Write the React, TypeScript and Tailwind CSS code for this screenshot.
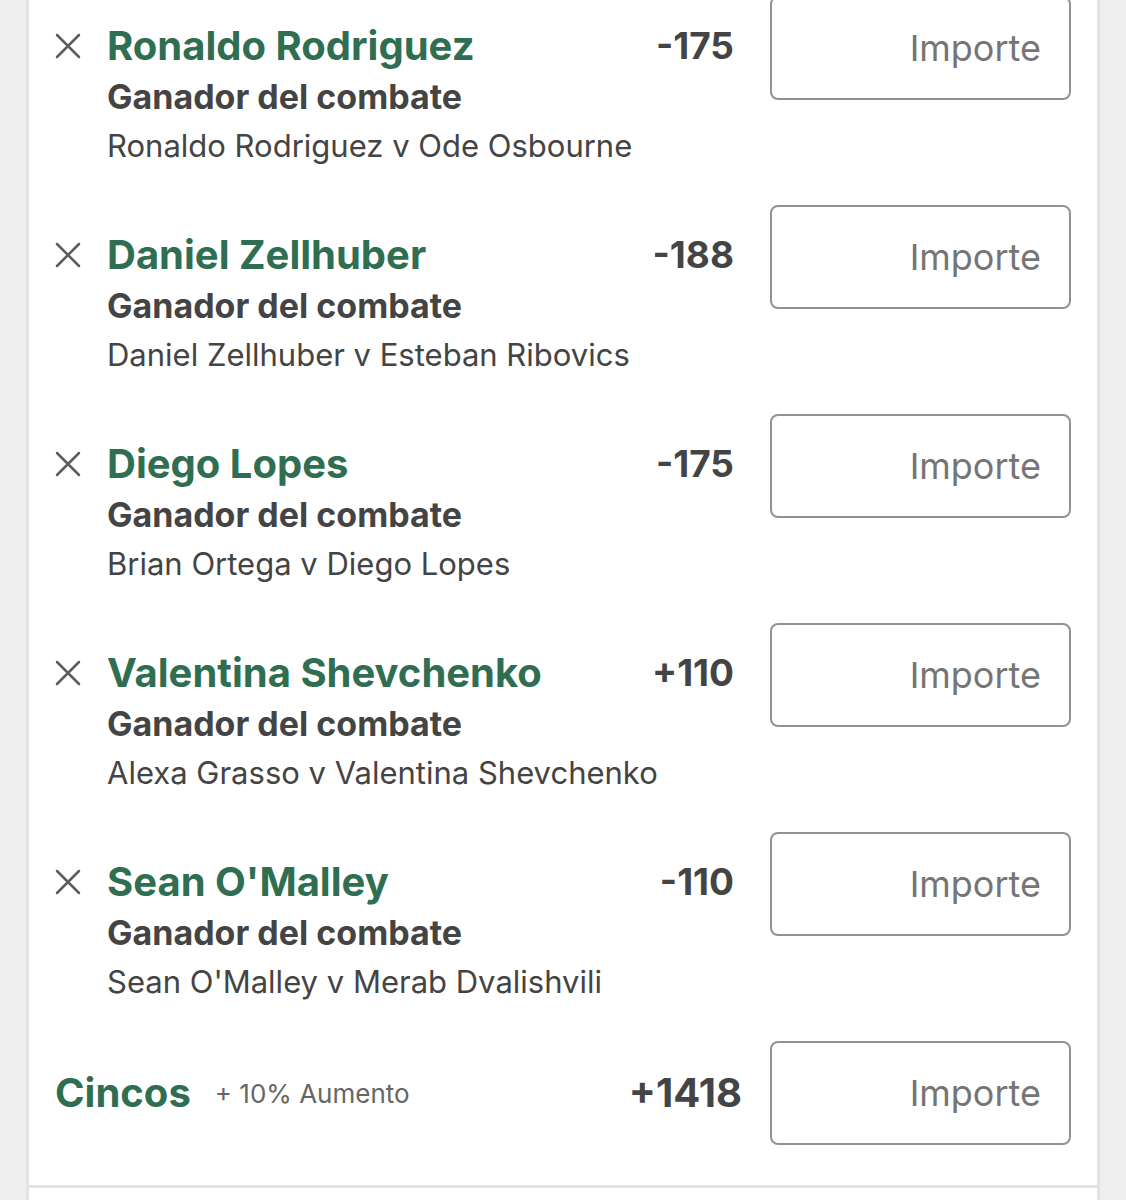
import { useState } from 'react';

interface Selection {
  id: string;
  name: string;
  market: string;
  event: string;
  odds: string;
}

const initialSelections: Selection[] = [
  { id: 'rodriguez', name: 'Ronaldo Rodriguez', market: 'Ganador del combate', event: 'Ronaldo Rodriguez v Ode Osbourne', odds: '-175' },
  { id: 'zellhuber', name: 'Daniel Zellhuber', market: 'Ganador del combate', event: 'Daniel Zellhuber v Esteban Ribovics', odds: '-188' },
  { id: 'lopes', name: 'Diego Lopes', market: 'Ganador del combate', event: 'Brian Ortega v Diego Lopes', odds: '-175' },
  { id: 'shevchenko', name: 'Valentina Shevchenko', market: 'Ganador del combate', event: 'Alexa Grasso v Valentina Shevchenko', odds: '+110' },
  { id: 'omalley', name: "Sean O'Malley", market: 'Ganador del combate', event: "Sean O'Malley v Merab Dvalishvili", odds: '-110' }
];

interface StakeInputProps {
  label: string;
  value: string;
  onChange: (value: string) => void;
}

function StakeInput({ label, value, onChange }: StakeInputProps) {
  return (
    <input
      type="text"
      inputMode="decimal"
      aria-label={label}
      placeholder="Importe"
      value={value}
      onChange={e => onChange(e.target.value)}
      className="h-[104px] w-[301px] shrink-0 rounded-lg border-2 border-[#929292] bg-white px-7 text-right text-[36px] text-[#444444] placeholder:text-[#757575] focus:border-[#2f6e51] focus:outline-none"
    />
  );
}

interface SelectionRowProps {
  selection: Selection;
  stake: string;
  onStakeChange: (value: string) => void;
  onRemove: () => void;
}

function SelectionRow({ selection, stake, onStakeChange, onRemove }: SelectionRowProps) {
  return (
    <li className="flex items-start pb-[35px]">
      <button type="button" onClick={onRemove} aria-label={`Eliminar ${selection.name}`} className="mt-[37px] mr-[26px] shrink-0 cursor-pointer">
        <svg viewBox="0 0 26 26" className="block size-[26px]" fill="none" stroke="#5c5c5c" strokeWidth="2.5" strokeLinecap="round">
          <path d="M2 2 24 24M24 2 2 24" />
        </svg>
      </button>

      <div className="min-w-0 flex-1 pt-6 text-[#444444]">
        <div className="flex items-center justify-between pr-9">
          <h3 className="text-[40px] leading-[52px] font-bold text-[#2f6e51]">{selection.name}</h3>
          <span className="text-[37px] leading-[52px] font-bold">{selection.odds}</span>
        </div>
        <p className="text-[34px] leading-[50px] font-bold">{selection.market}</p>
        <p className="text-[31px] leading-[48px]">{selection.event}</p>
      </div>

      <StakeInput label={`Importe ${selection.name}`} value={stake} onChange={onStakeChange} />
    </li>
  );
}

export default function App() {
  const [selections, setSelections] = useState(initialSelections);
  const [stakes, setStakes] = useState<Record<string, string>>({});

  const handleStake = (id: string, value: string) => {
    setStakes(prev => ({ ...prev, [id]: value }));
  };

  const handleRemove = (id: string) => {
    setSelections(prev => prev.filter(s => s.id !== id));
  };

  return (
    <div className="flex h-screen flex-col overflow-hidden bg-[#eeeeee] px-[26px] font-['Inter',sans-serif]">
      <main className="flow-root flex-1 border-x-3 border-[#e3e3e3] bg-white">
        {/* The slip is scrolled slightly past the top of the first row */}
        <section className="-mt-1 border-b-3 border-[#e3e3e3] px-[26px] pb-10">
          <ul>
            {selections.map(selection => (
              <SelectionRow
                key={selection.id}
                selection={selection}
                stake={stakes[selection.id] ?? ''}
                onStakeChange={value => handleStake(selection.id, value)}
                onRemove={() => handleRemove(selection.id)}
              />
            ))}
          </ul>

          <div className="flex items-center">
            <div className="flex min-w-0 flex-1 items-center pr-7">
              <h3 className="text-[40px] leading-[52px] font-bold text-[#2f6e51]">Cincos</h3>
              <span className="ml-6 text-[26px] text-[#666666]">+ 10% Aumento</span>
              <span className="ml-auto text-[40px] leading-[52px] font-bold text-[#444444]">+1418</span>
            </div>
            <StakeInput label="Importe Cincos" value={stakes.cincos ?? ''} onChange={value => handleStake('cincos', value)} />
          </div>
        </section>
      </main>
    </div>
  );
}
